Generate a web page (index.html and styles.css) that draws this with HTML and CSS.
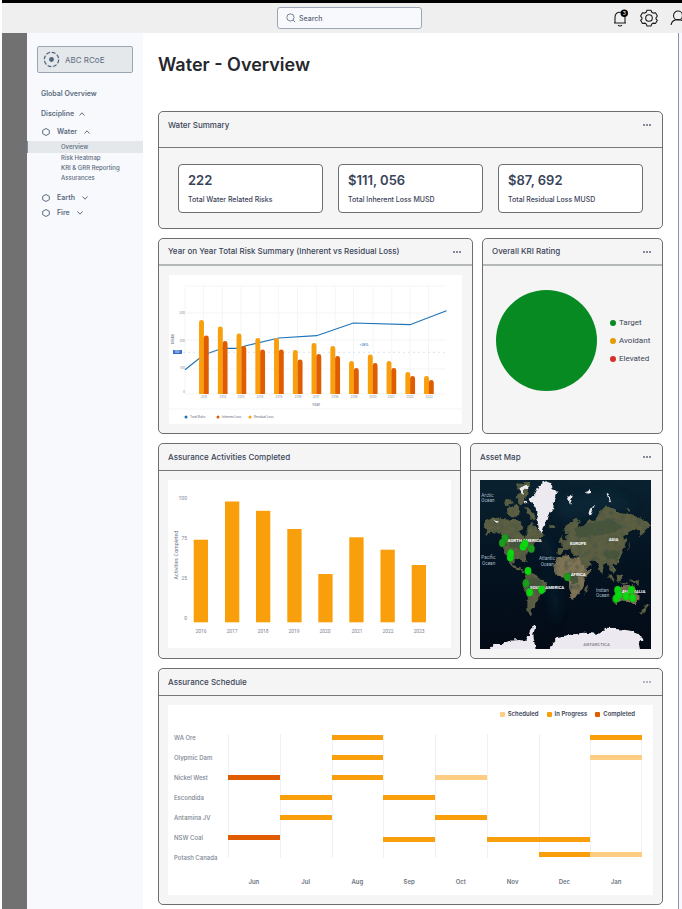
FILE: index.html
```
<!DOCTYPE html>
<html lang="en">
  <head>
    <meta charset="UTF-8" />
    <meta name="viewport" content="width=device-width, initial-scale=1.0" />
    <title>Water - Overview</title>
    <link rel="stylesheet" href="styles.css">
  </head>
  <body>
    <header class="topbar">
      <label class="search">
        <svg class="search-icon" viewBox="0 0 12 12" aria-hidden="true">
          <circle cx="5.3" cy="5.3" r="4.3" />
          <path d="M8.4 8.4L11 11" />
        </svg>
        <input type="text" class="search-input" placeholder="Search" aria-label="Search" />
      </label>
      <div class="top-actions">
        <button class="icon-btn" aria-label="Notifications">
          <svg viewBox="0 0 18 18">
            <path d="M3 14H15M4 14V8.5C4 5.2 6 3.2 9 3.2C12 3.2 14 5.2 14 8.5V14M7 16.3Q9 17.6 11 16.3" />
            <circle class="bell-dot" cx="13.3" cy="4.2" r="3.7" />
            <text class="bell-count" x="13.3" y="6">3</text>
          </svg>
        </button>
        <button class="icon-btn" aria-label="Settings">
          <svg viewBox="0 0 18 18">
            <circle cx="9" cy="9" r="3.3" />
            <path d="M7 1.2H11L11.8 3.3L13.2 4.1L15.5 3.7L17.4 7L16 8.8V9.8L17.4 11.3L15.5 14.5L13.2 14.1L11.8 14.9L11 17H7L6.2 14.9L4.8 14.1L2.5 14.5L.6 11.3L2 9.8V8.8L.6 7L2.5 3.7L4.8 4.1L6.2 3.3Z" />
          </svg>
        </button>
        <button class="icon-btn" aria-label="Account">
          <svg viewBox="0 0 18 18">
            <circle cx="9" cy="6.5" r="4.5" />
            <path d="M2 16C2.6 12.4 5 10.6 9 10.6C13 10.6 15.4 12.4 16 16" />
          </svg>
        </button>
      </div>
    </header>

    <div class="layout">
      <div class="rail"></div>

      <nav class="sidebar" aria-label="Main Navigation">
        <button class="org-btn">
          <svg class="org-icon" viewBox="0 0 18 18" aria-hidden="true">
            <circle class="org-ring" cx="9" cy="9" r="7.6" />
            <circle class="org-core" cx="9" cy="9" r="2.6" />
          </svg>
          ABC RCoE
        </button>
        <a class="nav-link nav-top" href="#">Global Overview</a>
        <a class="nav-link" href="#">Discipline
          <svg class="chevron" viewBox="0 0 6 4"><path d="M.5 3.5L3 .8L5.500 3.500" /></svg>
        </a>
        <a class="nav-link nav-item" href="#">
          <svg class="hexagon" viewBox="0 0 8 8"><path d="M4 .5L7.300 2.300V5.700L4 7.500L.7 5.700V2.300Z" /></svg>
          Water
          <svg class="chevron" viewBox="0 0 6 4"><path d="M.5 3.5L3 .8L5.500 3.500" /></svg>
        </a>
        <ul class="sub-nav">
          <li class="active"><a href="#">Overview</a></li>
          <li><a href="#">Risk Heatmap</a></li>
          <li><a href="#">KRI &amp; GRR Reporting</a></li>
          <li><a href="#">Assurances</a></li>
        </ul>
        <a class="nav-link nav-item" href="#">
          <svg class="hexagon" viewBox="0 0 8 8"><path d="M4 .5L7.300 2.300V5.700L4 7.500L.7 5.700V2.300Z" /></svg>
          Earth
          <svg class="chevron" viewBox="0 0 6 4"><path d="M.5 .5L3 3.200L5.500 .5" /></svg>
        </a>
        <a class="nav-link nav-item nav-last" href="#">
          <svg class="hexagon" viewBox="0 0 8 8"><path d="M4 .5L7.300 2.300V5.700L4 7.500L.7 5.700V2.300Z" /></svg>
          Fire
          <svg class="chevron" viewBox="0 0 6 4"><path d="M.5 .5L3 3.200L5.500 .5" /></svg>
        </a>
      </nav>

      <main>
        <h1>Water - Overview</h1>

        <div class="cards">
          <!-- Water Summary -->
          <section class="card">
            <div class="card-header summary-header">
              <h2>Water Summary</h2>
              <button class="more-btn" aria-label="More"><i></i><i></i><i></i></button>
            </div>
            <div class="stats">
              <div class="stat">
                <p class="stat-value">222</p>
                <p class="stat-label">Total Water Related Risks</p>
              </div>
              <div class="stat">
                <p class="stat-value">$111, 056</p>
                <p class="stat-label">Total Inherent Loss MUSD</p>
              </div>
              <div class="stat">
                <p class="stat-value">$87, 692</p>
                <p class="stat-label">Total Residual Loss MUSD</p>
              </div>
            </div>
          </section>

          <div class="row row-risk">
            <!-- Risk chart -->
            <section class="card">
              <div class="card-header thick">
                <h2>Year on Year Total Risk Summary (Inherent vs Residual Loss)</h2>
                <button class="more-btn" aria-label="More"><i></i><i></i><i></i></button>
              </div>
              <div class="card-body risk-body">
                <svg class="panel risk-chart" viewBox="0 0 293 149" role="img" aria-label="Year on year total risk">
                  <defs>
                    <clipPath id="plot"><rect x="0" y="0" width="293" height="119" /></clipPath>
                  </defs>
                  <path class="grid" d="M16 11H277M16 38H277M16 65H277M16 94H277M16 119H277M0 134H293" />
                  <path class="grid" d="M16 11V119M34.500 11V119M53.300 11V119M72 11V119M91 11V119M109.700 11V119M128.500 11V119M147.500 11V119M166.300 11V119M184.500 11V119M204 11V119M222.700 11V119M241 11V119M259.500 11V119" />
                  <path class="risk-line" d="M16 94.700L34.500 80L53.300 73.300H70L76 71L109.700 63L147.600 60.700L184.300 48L241 49.700L277.500 35.700" />
                  <path class="limit" d="M14 77.300H277" />
                  <g clip-path="url(#plot)">
                    <path class="bar-residual" d="M32.500 122V47.500M51.300 122V54M70 122V61M88.800 122V65.500M107.500 122V65.500M126.300 122V77.500M145 122V70.500M163.800 122V73.500M182.500 122V88.500M201.300 122V82M220 122V88.500M238.800 122V99.500M257.500 122V103.500" />
                    <path class="bar-inherent" d="M37.300 122V63M56.100 122V68.500M74.800 122V73.500M93.600 122V77M112.300 122V77M131.100 122V87M149.800 122V81.500M168.600 122V83.500M187.300 122V95.500M206.100 122V90.500M224.800 122V95.500M243.600 122V103.500M262.300 122V107.500" />
                  </g>
                  <g class="tiny end">
                    <text x="16" y="39">300</text>
                    <text x="16" y="67">200</text>
                    <text x="16" y="94">100</text>
                    <text x="16" y="118">0</text>
                  </g>
                  <rect class="limit-tag" x="4" y="75" width="9" height="4" />
                  <text class="tiny tag-text" x="8" y="78">150</text>
                  <text class="tiny change" x="195" y="71">+36%</text>
                  <g class="tiny mid">
                    <text x="35" y="123">2011</text>
                    <text x="54" y="123">2012</text>
                    <text x="72" y="123">2013</text>
                    <text x="91" y="123">2014</text>
                    <text x="110" y="123">2015</text>
                    <text x="129" y="123">2016</text>
                    <text x="147" y="123">2017</text>
                    <text x="166" y="123">2018</text>
                    <text x="185" y="123">2019</text>
                    <text x="204" y="123">2020</text>
                    <text x="222" y="123">2021</text>
                    <text x="241" y="123">2022</text>
                    <text x="260" y="123">2023</text>
                  </g>
                  <text class="axis small mid" x="147" y="131">Year</text>
                  <text class="axis small mid" transform="translate(5 64) rotate(-90)">Risks</text>
                  <circle class="blue" cx="17" cy="142" r="1.500" />
                  <circle class="dark-orange" cx="49" cy="142" r="1.500" />
                  <circle class="orange" cx="81" cy="142" r="1.500" />
                  <g class="tiny legend-text">
                    <text x="21" y="143">Total Risks</text>
                    <text x="53" y="143">Inherent Loss</text>
                    <text x="85" y="143">Residual Loss</text>
                  </g>
                </svg>
              </div>
            </section>

            <!-- KRI rating -->
            <section class="card">
              <div class="card-header thick">
                <h2>Overall KRI Rating</h2>
                <button class="more-btn" aria-label="More"><i></i><i></i><i></i></button>
              </div>
              <div class="kri">
                <div class="pie"></div>
                <ul class="kri-legend">
                  <li class="target">Target</li>
                  <li class="avoidant">Avoidant</li>
                  <li class="elevated">Elevated</li>
                </ul>
              </div>
            </section>
          </div>

          <div class="row row-assets">
            <!-- Assurance activities -->
            <section class="card">
              <div class="card-header">
                <h2>Assurance Activities Completed</h2>
              </div>
              <div class="card-body">
                <svg class="panel" viewBox="0 0 283 168" role="img" aria-label="Assurance activities completed">
                  <g class="orange">
                    <rect x="25.700" y="59.700" width="14.300" height="82.600" />
                    <rect x="57" y="21.500" width="14.300" height="120.800" />
                    <rect x="88" y="30.800" width="14.300" height="111.500" />
                    <rect x="119.300" y="49" width="14.300" height="93.300" />
                    <rect x="150.300" y="94" width="14.300" height="48.300" />
                    <rect x="181.300" y="57.300" width="14.300" height="85" />
                    <rect x="212.500" y="69.700" width="14.300" height="72.600" />
                    <rect x="243.700" y="85" width="14.300" height="57.300" />
                  </g>
                  <g class="bar-label end">
                    <text x="19" y="20">100</text>
                    <text x="19" y="60">75</text>
                    <text x="19" y="100">25</text>
                    <text x="19" y="140">0</text>
                  </g>
                  <g class="bar-label mid">
                    <text x="33" y="153">2016</text>
                    <text x="64" y="153">2017</text>
                    <text x="95" y="153">2018</text>
                    <text x="126" y="153">2019</text>
                    <text x="157" y="153">2020</text>
                    <text x="189" y="153">2021</text>
                    <text x="220" y="153">2022</text>
                    <text x="251" y="153">2023</text>
                  </g>
                  <text class="axis mid" transform="translate(10 75) rotate(-90)">Activities Completed</text>
                </svg>
              </div>
            </section>

            <!-- Asset map -->
            <section class="card">
              <div class="card-header">
                <h2>Asset Map</h2>
                <button class="more-btn" aria-label="More"><i></i><i></i><i></i></button>
              </div>
              <div class="card-body map-body">
                <svg class="map" viewBox="30 120 513 507" role="img" aria-label="Asset map">
                  <defs>
                    <!-- roughens coastlines and mottles the land -->
                    <filter id="terrain" x="0" y="0" width="100%" height="100%">
                      <feTurbulence type="fractalNoise" baseFrequency="0.06" numOctaves="4" seed="4" result="noise" />
                      <feDisplacementMap in="SourceGraphic" in2="noise" scale="16" xChannelSelector="R" yChannelSelector="G" result="land" />
                      <feColorMatrix in="noise" type="matrix" values="0 0 0 0 0.06  0 0 0 0 0.09  0 0 0 0 0.06  2 0 0 0 -0.850" result="shade" />
                      <feComposite in="shade" in2="land" operator="in" result="spots" />
                      <feMerge><feMergeNode in="land" /><feMergeNode in="spots" /></feMerge>
                    </filter>
                    <filter id="coast">
                      <feTurbulence type="fractalNoise" baseFrequency="0.07" numOctaves="3" seed="8" />
                      <feDisplacementMap in="SourceGraphic" scale="14" xChannelSelector="R" yChannelSelector="G" />
                    </filter>
                    <filter id="shelf"><feGaussianBlur stdDeviation="14" /></filter>
                    <linearGradient id="sea" x1="0" y1="0" x2="0" y2="1">
                      <stop offset="0" stop-color="#0a2230" />
                      <stop offset="0.400" stop-color="#051523" />
                      <stop offset="1" stop-color="#030a16" />
                    </linearGradient>
                  </defs>
                  <rect x="30" y="120" width="513" height="507" fill="url(#sea)" />
                  <path filter="url(#shelf)" fill="#0c2b3a" opacity=".6" d="M200 300L225 290L250 330L235 420L270 480L255 560L245 480L225 420L240 370ZM260 180L420 150L500 200L400 220L330 235L270 240Z" />
                  <g filter="url(#terrain)">
                    <path class="land" d="M42 245L70 232L100 238L130 240L150 240L158 262L150 275L165 292L172 270L185 245L200 262L222 285L205 300L190 308L178 325L166 345L170 366L160 362L152 356L135 358L132 376L145 382L152 380L152 392L166 402L154 398L122 378L110 350L102 335L104 305L92 282L68 275L44 288L52 272L42 262Z" />
                    <path class="land" d="M110 205L140 195L150 215L140 230L115 228ZM104 180L125 175L130 190L108 195ZM140 165L155 160L165 185L150 195ZM165 200L190 215L200 240L185 236L170 222ZM140 132L180 128L175 160L160 178L150 160Z" />
                    <path class="land" d="M168 402L188 402L205 410L212 420L230 432L226 450L212 466L205 482L192 494L186 508L180 530L173 520L172 495L174 468L162 448L158 430L166 418Z" />
                    <path class="land sand" d="M262 352L290 346L302 352L332 354L342 378L350 390L366 390L346 412L340 425L338 444L328 458L318 474L306 480L298 460L300 440L292 422L285 410L266 408L252 392L254 372Z" />
                    <path class="land" d="M262 340L264 322L278 322L276 308L292 298L288 290L300 280L286 278L282 266L302 242L322 234L332 248L320 262L340 256L355 240L372 244L388 220L408 200L432 202L440 218L470 222L500 230L530 242L542 256L524 272L512 292L506 270L484 272L462 290L472 300L462 322L452 330L456 346L444 366L428 372L436 390L428 402L422 390L412 366L402 374L396 404L384 378L374 362L358 360L362 378L346 388L336 372L326 350L310 345L300 328L292 334L282 326L275 342Z" />
                    <path class="land sand" d="M434 468L440 452L456 442L466 434L478 436L482 446L488 434L496 454L506 468L504 484L494 496L480 488L460 480L438 490Z" />
                    <path class="land" d="M416 402L434 418L430 424L414 408ZM440 408L456 402L456 420L442 422ZM474 418L505 422L510 434L492 430ZM466 330L478 318L484 302L474 320ZM268 300L274 288L280 306L270 314ZM240 256L256 256L254 264L242 264ZM346 440L354 436L348 462L342 456ZM514 512L530 492L536 496L518 522ZM450 424L474 428L472 432L448 428ZM465 203L485 206L478 212Z" />
                    <path class="forest" d="M110 290L165 300L175 315L160 335L120 320ZM172 415L205 416L216 432L198 452L176 440ZM290 398L322 398L325 425L305 430ZM310 262L420 235L465 262L400 285L320 290ZM402 335L450 330L440 362L415 360Z" />
                  </g>
                  <g class="ice" filter="url(#coast)">
                    <path d="M176 180L196 160L206 138L226 124L244 130L248 148L262 152L252 180L250 205L238 222L228 242L218 274L212 280L206 264L202 238L202 212L190 192Z" />
                    <path d="M152 142L166 134L182 136L174 146L162 150L160 164L152 158ZM162 188L170 182L172 190L164 194ZM70 238L82 244L84 250L76 246ZM292 168L302 164L308 172L300 192ZM344 156L362 150L364 158L352 162ZM354 224L360 206L376 194L370 204L360 226ZM410 158L416 162L424 190L416 184Z" />
                    <path d="M52 660L70 612L96 612L118 602L150 600L168 602L176 586L182 566L196 556L190 586L202 660Z" />
                    <path d="M224 660L250 604L262 592L300 584L340 578L364 580L386 582L410 566L450 568L482 572L512 584L518 600L506 612L516 660Z" />
                  </g>
                  <g class="map-label">
                    <text x="112" y="307">NORTH AMERICA</text>
                    <text x="300" y="315">EUROPE</text>
                    <text x="416" y="303">ASIA</text>
                    <text x="302" y="408">AFRICA</text>
                    <text x="180" y="448">SOUTH AMERICA</text>
                    <text x="456" y="459">AUSTRALIA</text>
                    <text class="ice-label" x="340" y="617">ANTARCTICA</text>
                  </g>
                  <g class="sea-label">
                    <text x="34" y="170">Arctic</text><text x="34" y="187">Ocean</text>
                    <text x="34" y="357">Pacific</text><text x="36" y="374">Ocean</text>
                    <text x="207" y="361">Atlantic</text><text x="212" y="377">Ocean</text>
                    <text x="378" y="456">Indian</text><text x="378" y="472">Ocean</text>
                  </g>
                  <g class="pins dim">
                    <ellipse cx="105" cy="295" rx="10" ry="12" /><ellipse cx="97" cy="309" rx="10" ry="12" />
                    <ellipse cx="184" cy="326" rx="10" ry="12" /><ellipse cx="168" cy="430" rx="10" ry="12" />
                    <ellipse cx="292" cy="411" rx="10" ry="12" /><ellipse cx="437" cy="477" rx="10" ry="12" />
                  </g>
                  <g class="pins">
                    <ellipse cx="159" cy="320" rx="10" ry="12" /><ellipse cx="165" cy="311" rx="10" ry="12" />
                    <ellipse cx="121" cy="352" rx="10" ry="12" /><ellipse cx="122" cy="340" rx="10" ry="12" />
                    <ellipse cx="174" cy="393" rx="10" ry="12" /><ellipse cx="179" cy="457" rx="10" ry="12" />
                    <ellipse cx="215" cy="449" rx="10" ry="12" /><ellipse cx="443" cy="450" rx="10" ry="12" />
                    <ellipse cx="440" cy="474" rx="10" ry="12" /><ellipse cx="446" cy="464" rx="10" ry="12" />
                    <ellipse cx="468" cy="469" rx="10" ry="12" /><ellipse cx="484" cy="450" rx="10" ry="12" />
                    <ellipse cx="488" cy="474" rx="10" ry="12" />
                  </g>
                </svg>
              </div>
            </section>
          </div>

          <!-- Assurance schedule -->
          <section class="card">
            <div class="card-header">
              <h2>Assurance Schedule</h2>
              <button class="more-btn light" aria-label="More"><i></i><i></i><i></i></button>
            </div>
            <div class="card-body">
              <div class="panel schedule">
                <ul class="schedule-legend">
                  <li class="scheduled">Scheduled</li>
                  <li class="progress">In Progress</li>
                  <li class="completed">Completed</li>
                </ul>
                <div class="gantt">
                  <span class="line m1"></span><span class="line m2"></span>
                  <span class="line m3"></span><span class="line m4"></span>
                  <span class="line m5"></span><span class="line m6"></span>
                  <span class="line m7"></span><span class="line m8 last"></span>

                  <span class="site r1">WA Ore</span>
                  <span class="bar progress r1 m3"></span>
                  <span class="bar progress r1 m8"></span>

                  <span class="site r2">Olypmic Dam</span>
                  <span class="bar progress r2 m3"></span>
                  <span class="bar scheduled r2 m8"></span>

                  <span class="site r3">Nickel West</span>
                  <span class="bar completed r3 m1"></span>
                  <span class="bar progress r3 m3"></span>
                  <span class="bar scheduled r3 m5"></span>

                  <span class="site r4">Escondida</span>
                  <span class="bar progress r4 m2"></span>
                  <span class="bar progress r4 m4"></span>

                  <span class="site r5">Antamina JV</span>
                  <span class="bar progress r5 m2"></span>
                  <span class="bar progress r5 m5"></span>

                  <span class="site r6">NSW Coal</span>
                  <span class="bar completed r6 m1"></span>
                  <span class="bar progress low r6 m4"></span>
                  <span class="bar progress low r6 m6"></span>
                  <span class="bar progress low r6 m7"></span>

                  <span class="site r7">Potash Canada</span>
                  <span class="bar progress high r7 m7"></span>
                  <span class="bar scheduled high r7 m8"></span>
                </div>
                <div class="months">
                  <span class="m1">Jun</span><span>Jul</span><span>Aug</span><span>Sep</span>
                  <span>Oct</span><span>Nov</span><span>Dec</span><span>Jan</span>
                </div>
              </div>
            </div>
          </section>
        </div>
      </main>

      <div class="edge"></div>
    </div>
  </body>
</html>
```
FILE: styles.css
```
* {
  margin: 0;
  padding: 0;
  box-sizing: border-box;
}

body {
  display: flex;
  flex-direction: column;
  min-height: 100vh;
  padding-left: 2px;
  background: #fff;
  color: #3a4458;
  font-family: Inter, "Liberation Sans", sans-serif;
  font-size: 8px;
}

a {
  color: inherit;
  text-decoration: none;
}

ul {
  list-style: none;
}

button {
  border: none;
  background: none;
  font-family: inherit;
  cursor: pointer;
}

svg {
  display: block;
}

/* Top bar */
.topbar {
  display: grid;
  grid-template-columns: 275fr 145px 260fr;
  align-items: center;
  height: 33px;
  padding-top: 3px;
  border-top: 3px solid #000;
  background: #efefef;
  overflow: hidden;
}

.search {
  grid-column: 2;
  display: flex;
  align-items: center;
  gap: 3px;
  height: 22px;
  margin-bottom: 3px;
  padding: 0 8px;
  border: 1px solid #9ba7b7;
  border-radius: 3px;
  background: #f8f9fc;
}

.search-icon {
  flex: none;
  width: 10px;
  height: 10px;
  fill: none;
  stroke: #5b6d86;
}

.search-input {
  width: 100%;
  border: none;
  outline: none;
  background: none;
  color: #5b6678;
  font-family: inherit;
  font-size: 7px;
  font-weight: 500;
}

.search-input::placeholder {
  color: #5b6678;
}

.top-actions {
  display: flex;
  gap: 11px;
  justify-self: end;
  margin: 0 -5px 3px 0;
}

.icon-btn svg {
  width: 18px;
  height: 18px;
  fill: none;
  stroke: #1b1b1b;
  stroke-width: 1.1;
  stroke-linejoin: round;
}

.icon-btn .bell-dot {
  fill: #000;
  stroke: none;
}

.icon-btn .bell-count {
  fill: #fff;
  stroke: none;
  font-size: 5px;
  text-anchor: middle;
}

/* Page columns */
.layout {
  display: grid;
  grid-template-columns: 25px 116px 1fr 4px;
  flex: 1;
}

.rail {
  background: #717171;
}

.edge {
  border-left: 1px solid #8f93a3;
  background: #f8f9fc;
}

/* Sidebar */
.sidebar {
  display: flex;
  flex-direction: column;
  padding-top: 13px;
  background: #f8f9fc;
  color: #5b6b80;
}

.org-btn {
  display: flex;
  align-items: center;
  gap: 5px;
  height: 27px;
  margin: 0 10px;
  padding: 0 5px;
  border: 1px solid #9aa6b3;
  border-radius: 2px;
  background: #e4e8eb;
  color: #5b6b80;
  font-size: 8px;
}

.org-icon {
  width: 17px;
  height: 17px;
}

.org-ring {
  fill: none;
  stroke: #52647c;
  stroke-width: 1.3;
  stroke-dasharray: 4.2 1.77;
}

.org-core {
  fill: #52647c;
}

.nav-link {
  display: flex;
  align-items: center;
  gap: 5px;
  margin-top: 8px;
  padding-left: 14px;
  font-size: 7px;
  font-weight: 600;
  line-height: 12px;
}

.nav-top {
  margin-top: 15px;
}

.nav-item {
  gap: 7px;
  margin-top: 6px;
  padding-left: 15px;
}

.nav-last {
  margin-top: 3px;
}

.chevron,
.hexagon {
  fill: none;
  stroke: #5b6b80;
}

.chevron {
  width: 6px;
  height: 4px;
}

.hexagon {
  width: 8px;
  height: 8px;
}

.sub-nav {
  margin: 3px 0;
  font-size: 6px;
  font-weight: 500;
  line-height: 10px;
}

.sub-nav a {
  display: block;
  padding-left: 34px;
}

.sub-nav .active {
  background: #e4e8eb;
  box-shadow: inset 1px 0 #7d8ea6;
  line-height: 12px;
}

/* Main */
main {
  min-width: 0;
  padding: 20px 15px 4px;
}

h1 {
  margin-bottom: 34px;
  color: #26272b;
  font-size: 18px;
  font-weight: 600;
  line-height: 24px;
}

.cards {
  display: flex;
  flex-direction: column;
  gap: 9px;
}

.row {
  display: grid;
  gap: 9px;
}

.row-risk {
  grid-template-columns: 315fr 181fr;
}

.row-assets {
  grid-template-columns: 303fr 193fr;
}

.card {
  display: flex;
  flex-direction: column;
  min-width: 0;
  border: 1px solid #6d6e70;
  border-radius: 5px;
  background: #f5f5f5;
}

.card-header {
  display: flex;
  justify-content: space-between;
  align-items: center;
  padding: 0 11px 0 9px;
  border-bottom: 1px solid #77787a;
  line-height: 26px;
}

.summary-header {
  padding-bottom: 9px;
}

.card-header.thick {
  border-bottom: 2px solid #b6bab6;
  line-height: 25px;
}

h2 {
  font-size: 8px;
  font-weight: 500;
}

.more-btn {
  display: flex;
  gap: 1px;
  padding: 3px 0;
}

.more-btn i {
  width: 2px;
  height: 2px;
  border-radius: 1px;
  background: #5d6778;
}

.more-btn.light i {
  background: #98a0ac;
}

.card-body {
  padding: 9px;
}

.risk-body {
  padding: 9px 10px;
}

.map-body {
  padding-right: 11px;
}

.panel {
  width: 100%;
  background: #fff;
}

/* Summary numbers */
.stats {
  display: grid;
  grid-template-columns: repeat(3, 1fr);
  gap: 15px;
  padding: 16px 19px 15px;
}

.stat {
  padding: 7px 8px 6px 9px;
  border: 1px solid #6d6e70;
  border-radius: 4px;
  background: #fff;
}

.stat-value {
  margin-bottom: 6px;
  font-size: 13px;
  font-weight: 600;
  line-height: 16px;
}

.stat-label {
  font-size: 7px;
  font-weight: 500;
  line-height: 12px;
}

/* Charts */
.grid {
  fill: none;
  stroke: #f4f5f7;
}

.risk-line {
  fill: none;
  stroke: #1f74b8;
  stroke-width: 1.2;
}

.limit {
  stroke: #c3cfe0;
  stroke-width: 0.6;
  stroke-dasharray: 2 3;
}

.bar-residual,
.bar-inherent {
  fill: none;
  stroke: #f99f0b;
  stroke-width: 4.9;
  stroke-linecap: round;
}

.bar-inherent {
  stroke: #e05c00;
}

.orange {
  fill: #f99f0b;
}

.dark-orange {
  fill: #e05c00;
}

.blue,
.change {
  fill: #1f6fb5;
}

.limit-tag {
  fill: #3a6fce;
}

.tiny {
  fill: #7d8694;
  font-size: 3px;
}

.legend-text {
  fill: #5c6573;
}

.tag-text {
  fill: #fff;
  text-anchor: middle;
}

.change {
  fill: #1f6fb5;
  font-weight: 600;
  text-anchor: middle;
}

.axis {
  fill: #6b7482;
  font-size: 5px;
}

.axis.small {
  font-size: 4px;
}

.bar-label {
  fill: #7d8694;
  font-family: Roboto, sans-serif;
  font-size: 5px;
}

.end {
  text-anchor: end;
}

.mid {
  text-anchor: middle;
}

/* KRI rating */
.kri {
  display: flex;
  flex: 1;
  align-items: center;
  gap: 13px;
  padding: 0 9px 18px 13px;
}

.pie {
  width: 101px;
  aspect-ratio: 1;
  border-radius: 50%;
  background: #078a22;
}

.kri-legend {
  display: flex;
  flex-direction: column;
  gap: 8px;
  font-family: Roboto, sans-serif;
  font-size: 8px;
  line-height: 10px;
}

.kri-legend li,
.schedule-legend li {
  display: flex;
  align-items: center;
  gap: 3px;
}

.kri-legend li::before {
  content: "";
  width: 6px;
  height: 6px;
  border-radius: 50%;
  background: #078a22;
}

.kri-legend .avoidant::before {
  background: #e69a08;
}

.kri-legend .elevated::before {
  background: #d6302c;
}

/* Asset map */
.map {
  width: 100%;
}

.land {
  fill: #5d5f42;
}

.sand {
  fill: #7f7355;
}

.forest {
  fill: #46543a;
}

.ice {
  fill: #eceaf0;
}

.map-label {
  fill: #fff;
  font-family: Roboto, sans-serif;
  font-size: 13px;
  font-weight: 700;
}

.map-label .ice-label {
  fill: #8d8d90;
}

.sea-label {
  fill: #a9bccb;
  font-family: Roboto, sans-serif;
  font-size: 14px;
}

.pins {
  fill: #0bd80f;
  stroke: #0ab010;
}

.pins.dim {
  fill: #1c9c1c;
  stroke: #158015;
}

/* Schedule */
.schedule {
  padding: 0 11px 7px 6px;
}

.schedule-legend {
  display: flex;
  justify-content: flex-end;
  gap: 8px;
  padding-right: 7px;
  margin-bottom: 4px;
  font-size: 6px;
  font-weight: 600;
  line-height: 18px;
}

.schedule-legend li::before {
  content: "";
  width: 5px;
  height: 5px;
  border-radius: 1px;
  background: #fccd82;
}

.schedule-legend .progress::before {
  background: #f99f0b;
}

.schedule-legend .completed::before {
  background: #e05c00;
}

.gantt,
.months {
  display: grid;
  grid-template-columns: 54px repeat(8, 1fr);
}

.gantt {
  grid-template-rows: repeat(7, 20px);
  align-items: center;
}

.site {
  grid-column: 1;
  color: #7b8492;
  font-size: 6px;
  font-weight: 500;
  white-space: nowrap;
}

.line {
  grid-row: 1 / -1;
  align-self: stretch;
  margin: 7px 0 9px;
  border-left: 1px solid #f1f1f5;
}

.line.last {
  border-right: 1px solid #f1f1f5;
}

.bar {
  height: 5px;
}

.bar.scheduled {
  background: #fccd82;
}

.bar.progress {
  background: #f99f0b;
}

.bar.completed {
  background: #e05c00;
}

.bar.low {
  margin-top: 5px;
}

.bar.high {
  margin-bottom: 5px;
}

.r1 { grid-row: 1; }
.r2 { grid-row: 2; }
.r3 { grid-row: 3; }
.r4 { grid-row: 4; }
.r5 { grid-row: 5; }
.r6 { grid-row: 6; }
.r7 { grid-row: 7; }

.m1 { grid-column: 2; }
.m2 { grid-column: 3; }
.m3 { grid-column: 4; }
.m4 { grid-column: 5; }
.m5 { grid-column: 6; }
.m6 { grid-column: 7; }
.m7 { grid-column: 8; }
.m8 { grid-column: 9; }

.months {
  margin-top: 9px;
  color: #6b7482;
  font-size: 6px;
  font-weight: 600;
  line-height: 12px;
  text-align: center;
}
```
